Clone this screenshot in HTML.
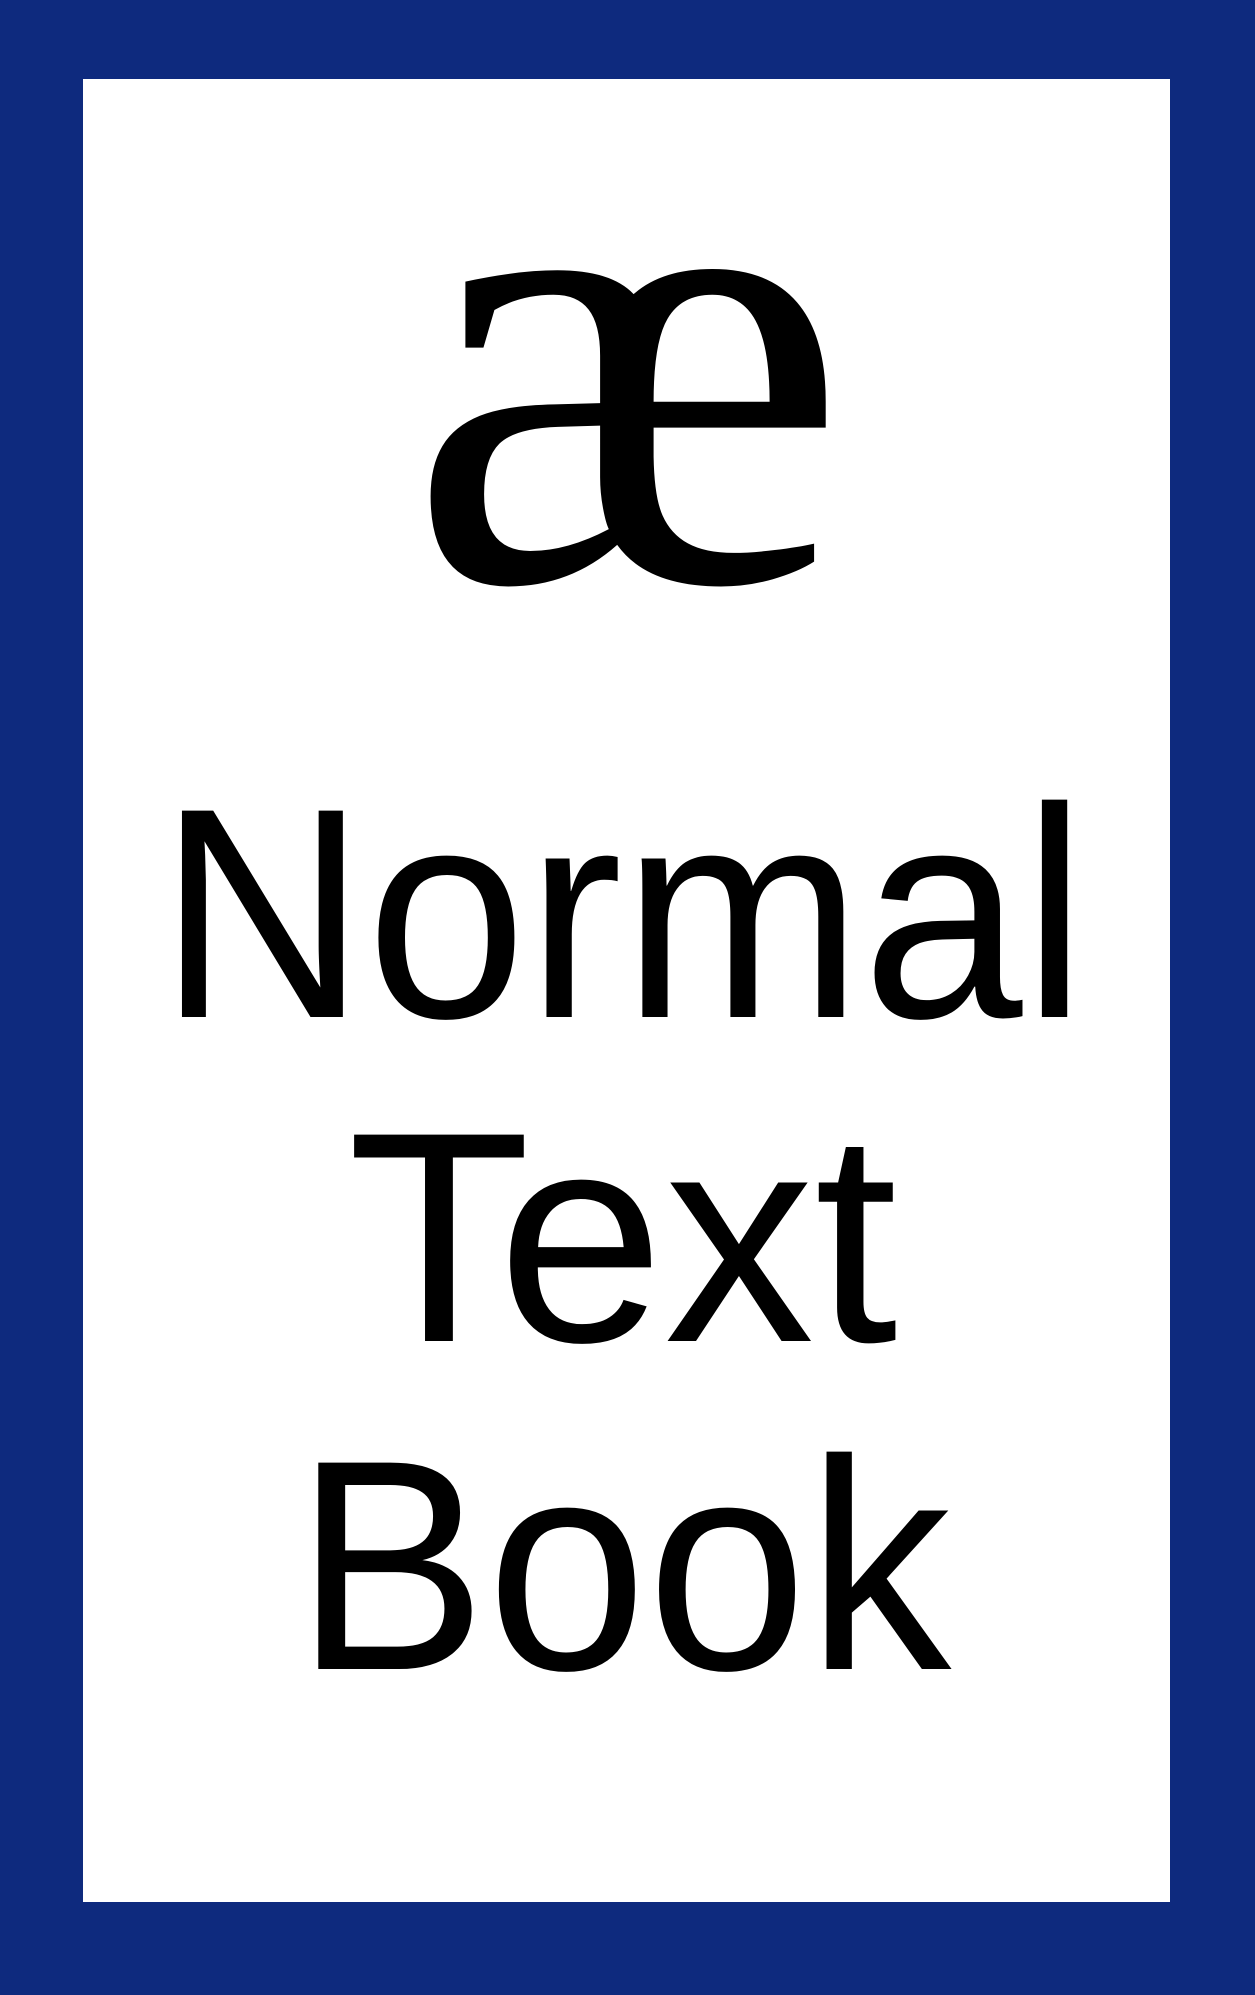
<!DOCTYPE html>
<html><head><style>
html,body{margin:0;padding:0;}
body{width:1255px;height:1995px;background:#0e2a7e;position:relative;overflow:hidden;}
.inner{position:absolute;left:83px;top:79px;width:1087px;height:1823px;background:#fff;}
.t{position:absolute;left:0;width:1255px;text-align:center;font-family:"Liberation Sans",sans-serif;color:#000;line-height:1;white-space:nowrap;}
.ae{font-family:"Liberation Serif",serif;font-size:660px;}
.s{font-size:300px;left:-5px;}
.s span{display:inline-block;transform:scaleX(0.96);}
</style></head><body>
<div class="inner"></div>
<div class="t ae" style="top:0px;height:700px;"><span style="position:absolute;left:0;right:0;top:28px;">æ</span></div>
<div class="t s" style="top:763px;"><span>Normal</span></div>
<div class="t s" style="top:1087px;"><span style="transform:scaleX(1.0);">Text</span></div>
<div class="t s" style="top:1415px;"><span>Book</span></div>
</body></html>
